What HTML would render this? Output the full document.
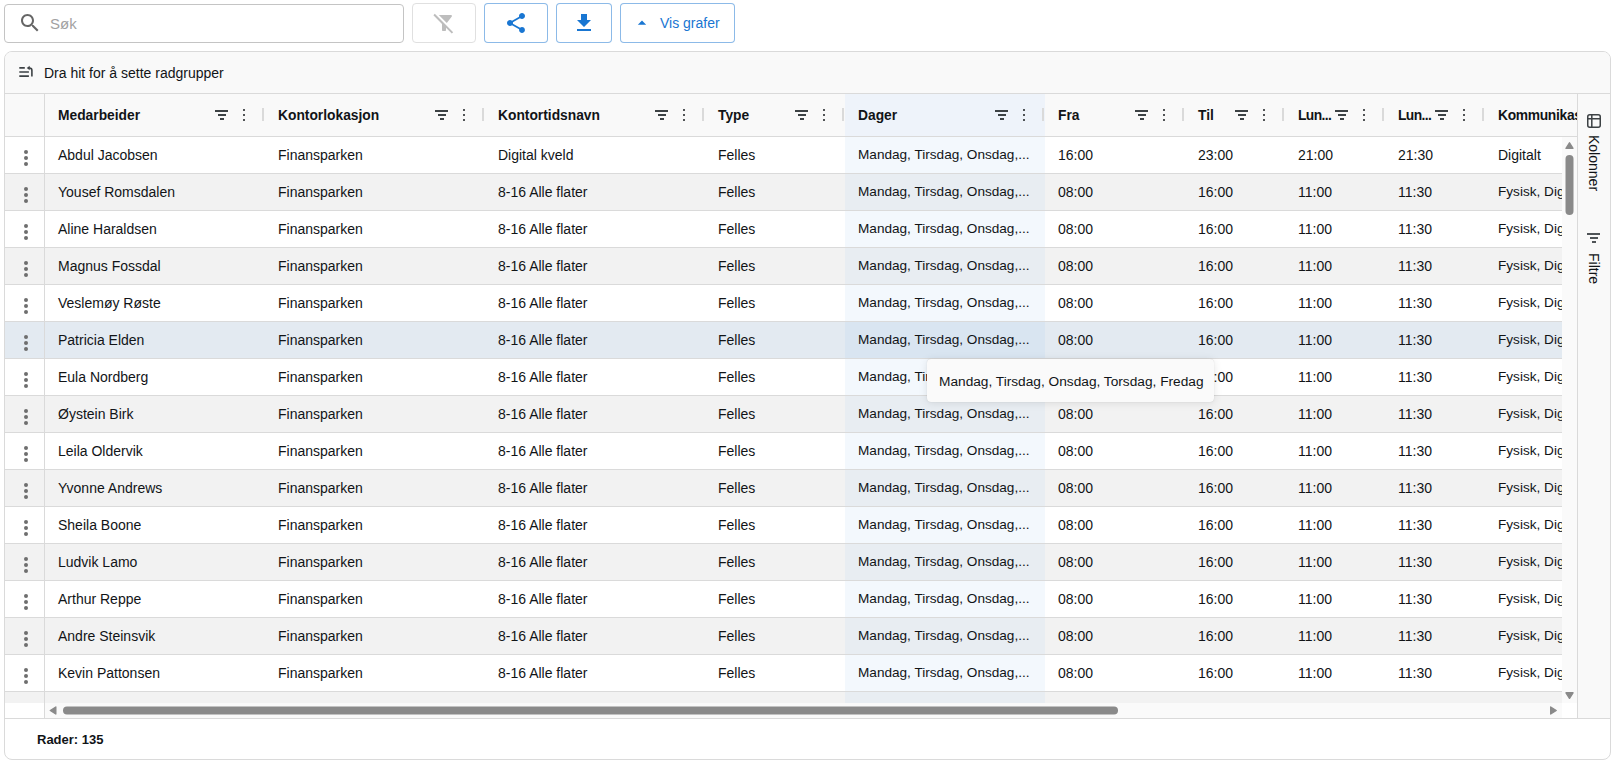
<!DOCTYPE html><html><head><meta charset="utf-8"><style>
*{box-sizing:border-box;margin:0;padding:0}
html,body{width:1615px;height:763px;overflow:hidden;background:#fff}
body{position:relative;font-family:"Liberation Sans",sans-serif;color:#111417;font-size:14px}
.a{position:absolute}
.btn{position:absolute;top:3px;height:40px;border:1px solid rgba(25,118,210,0.5);border-radius:4px;background:#fff}
.grid{position:absolute;left:4px;top:51px;width:1607px;height:709px;border:1px solid #dadada;border-radius:8px;overflow:hidden;background:#fff}
.hc{position:absolute;top:94px;height:42px;overflow:hidden}
.hl{position:absolute;left:13px;top:1px;line-height:42px;font-weight:bold;font-size:13.8px;white-space:nowrap}
.row{position:absolute;left:5px;width:1557px;height:37px;border-bottom:1px solid #dadada;overflow:hidden}
.c{position:absolute;top:0;line-height:36px;white-space:nowrap}
</style></head><body>
<div class="a" style="left:4px;top:4px;width:400px;height:39px;border:1px solid #c4c4c4;border-radius:4px"></div>
<svg class="a" style="left:18px;top:11px" width="24" height="24" viewBox="0 0 24 24"><path fill="#666" d="M15.5 14h-.79l-.28-.27C15.41 12.59 16 11.11 16 9.5 16 5.91 13.09 3 9.5 3S3 5.91 3 9.5 5.91 16 9.5 16c1.61 0 3.09-.59 4.23-1.57l.27.28v.79l5 4.99L20.49 19l-4.99-5zm-6 0C7.01 14 5 11.99 5 9.5S7.01 5 9.5 5 14 7.01 14 9.5 11.99 14 9.5 14z"/></svg>
<div class="a" style="left:50px;top:4px;line-height:39px;font-size:15px;color:#a2a2a2">Søk</div>
<div class="btn" style="left:412px;width:64px;border-color:#e0e0e0"></div>
<svg class="a" style="left:432px;top:11px" width="24" height="24" viewBox="0 0 24 24"><path fill="#bdbdbd" d="M19.79 5.61C20.3 4.95 19.83 4 19 4H6.83l7.97 7.97 4.99-6.36zM2.81 2.81 1.39 4.22 10 13v6c0 .55.45 1 1 1h2c.55 0 1-.45 1-1v-2.17l5.78 5.78 1.41-1.41L2.81 2.81z"/></svg>
<div class="btn" style="left:484px;width:64px"></div>
<svg class="a" style="left:504px;top:11px" width="24" height="24" viewBox="0 0 24 24"><path fill="#1976d2" d="M18 16.08c-.76 0-1.44.3-1.96.77L8.91 12.7c.05-.23.09-.46.09-.7s-.04-.47-.09-.7l7.05-4.11c.54.5 1.25.81 2.04.81 1.66 0 3-1.34 3-3s-1.34-3-3-3-3 1.34-3 3c0 .24.04.47.09.7L8.04 9.81C7.5 9.31 6.79 9 6 9c-1.66 0-3 1.34-3 3s1.34 3 3 3c.79 0 1.5-.31 2.04-.81l7.12 4.16c-.05.21-.08.43-.08.65 0 1.61 1.31 2.92 2.92 2.92 1.61 0 2.92-1.31 2.92-2.92s-1.31-2.92-2.92-2.92z"/></svg>
<div class="btn" style="left:556px;width:56px"></div>
<svg class="a" style="left:572px;top:11px" width="24" height="24" viewBox="0 0 24 24"><path fill="#1976d2" d="M19 9h-4V3H9v6H5l7 7 7-7zM5 18v2h14v-2H5z"/></svg>
<div class="btn" style="left:620px;width:115px"></div>
<svg class="a" style="left:632px;top:13px" width="20" height="20" viewBox="0 0 24 24"><path fill="#1976d2" d="m7 14 5-5 5 5z"/></svg>
<div class="a" style="left:660px;top:3px;line-height:40px;font-size:14px;color:#1976d2">Vis grafer</div>
<div class="grid"></div>
<div class="a" style="left:5px;top:52px;width:1605px;height:42px;background:#f9f9f9;border-bottom:1px solid #dadada;border-radius:7px 7px 0 0"></div>
<svg class="a" style="left:18px;top:64px" width="16" height="16" viewBox="0 0 16 16"><g fill="none" stroke="#3d4245" stroke-width="1.6"><path d="M1.3 3.9H6.8M1.3 8H10.9M1.3 12.1H10.9M13.9 12.4V6.5Q13.9 4 11.4 4H10.5"/></g><path fill="#3d4245" d="M11.7 1.8V6.2L8.7 4z"/></svg>
<div class="a" style="left:44px;top:52px;line-height:42px;font-size:14px">Dra hit for å sette radgrupper</div>
<div class="a" style="left:5px;top:94px;width:1572px;height:43px;background:#f9f9f9;border-bottom:1px solid #dadada"></div>
<div class="a" style="left:44px;top:94px;width:1px;height:42px;background:#dadada"></div>
<div class="a" style="left:845px;top:94px;width:200px;height:42px;background:#eef3fa"></div>
<div class="hc" style="left:45px;width:220px"><div class="hl" style="">Medarbeider</div></div>
<div class="a" style="left:215px;top:110px;width:13px;height:2px;background:#3d4245"></div><div class="a" style="left:218px;top:114px;width:8px;height:2px;background:#3d4245"></div><div class="a" style="left:220px;top:118px;width:4px;height:2px;background:#3d4245"></div>
<div class="a" style="left:242.7px;top:108.7px;width:2.6px;height:2.6px;border-radius:50%;background:#181d1f"></div><div class="a" style="left:242.7px;top:113.7px;width:2.6px;height:2.6px;border-radius:50%;background:#181d1f"></div><div class="a" style="left:242.7px;top:118.7px;width:2.6px;height:2.6px;border-radius:50%;background:#181d1f"></div>
<div class="a" style="left:262px;top:108px;width:2px;height:13px;background:#dadada"></div>
<div class="hc" style="left:265px;width:220px"><div class="hl" style="">Kontorlokasjon</div></div>
<div class="a" style="left:435px;top:110px;width:13px;height:2px;background:#3d4245"></div><div class="a" style="left:438px;top:114px;width:8px;height:2px;background:#3d4245"></div><div class="a" style="left:440px;top:118px;width:4px;height:2px;background:#3d4245"></div>
<div class="a" style="left:462.7px;top:108.7px;width:2.6px;height:2.6px;border-radius:50%;background:#181d1f"></div><div class="a" style="left:462.7px;top:113.7px;width:2.6px;height:2.6px;border-radius:50%;background:#181d1f"></div><div class="a" style="left:462.7px;top:118.7px;width:2.6px;height:2.6px;border-radius:50%;background:#181d1f"></div>
<div class="a" style="left:482px;top:108px;width:2px;height:13px;background:#dadada"></div>
<div class="hc" style="left:485px;width:220px"><div class="hl" style="">Kontortidsnavn</div></div>
<div class="a" style="left:655px;top:110px;width:13px;height:2px;background:#3d4245"></div><div class="a" style="left:658px;top:114px;width:8px;height:2px;background:#3d4245"></div><div class="a" style="left:660px;top:118px;width:4px;height:2px;background:#3d4245"></div>
<div class="a" style="left:682.7px;top:108.7px;width:2.6px;height:2.6px;border-radius:50%;background:#181d1f"></div><div class="a" style="left:682.7px;top:113.7px;width:2.6px;height:2.6px;border-radius:50%;background:#181d1f"></div><div class="a" style="left:682.7px;top:118.7px;width:2.6px;height:2.6px;border-radius:50%;background:#181d1f"></div>
<div class="a" style="left:702px;top:108px;width:2px;height:13px;background:#dadada"></div>
<div class="hc" style="left:705px;width:140px"><div class="hl" style="">Type</div></div>
<div class="a" style="left:795px;top:110px;width:13px;height:2px;background:#3d4245"></div><div class="a" style="left:798px;top:114px;width:8px;height:2px;background:#3d4245"></div><div class="a" style="left:800px;top:118px;width:4px;height:2px;background:#3d4245"></div>
<div class="a" style="left:822.7px;top:108.7px;width:2.6px;height:2.6px;border-radius:50%;background:#181d1f"></div><div class="a" style="left:822.7px;top:113.7px;width:2.6px;height:2.6px;border-radius:50%;background:#181d1f"></div><div class="a" style="left:822.7px;top:118.7px;width:2.6px;height:2.6px;border-radius:50%;background:#181d1f"></div>
<div class="a" style="left:842px;top:108px;width:2px;height:13px;background:#dadada"></div>
<div class="hc" style="left:845px;width:200px"><div class="hl" style="">Dager</div></div>
<div class="a" style="left:995px;top:110px;width:13px;height:2px;background:#3d4245"></div><div class="a" style="left:998px;top:114px;width:8px;height:2px;background:#3d4245"></div><div class="a" style="left:1000px;top:118px;width:4px;height:2px;background:#3d4245"></div>
<div class="a" style="left:1022.7px;top:108.7px;width:2.6px;height:2.6px;border-radius:50%;background:#181d1f"></div><div class="a" style="left:1022.7px;top:113.7px;width:2.6px;height:2.6px;border-radius:50%;background:#181d1f"></div><div class="a" style="left:1022.7px;top:118.7px;width:2.6px;height:2.6px;border-radius:50%;background:#181d1f"></div>
<div class="a" style="left:1042px;top:108px;width:2px;height:13px;background:#dadada"></div>
<div class="hc" style="left:1045px;width:140px"><div class="hl" style="">Fra</div></div>
<div class="a" style="left:1135px;top:110px;width:13px;height:2px;background:#3d4245"></div><div class="a" style="left:1138px;top:114px;width:8px;height:2px;background:#3d4245"></div><div class="a" style="left:1140px;top:118px;width:4px;height:2px;background:#3d4245"></div>
<div class="a" style="left:1162.7px;top:108.7px;width:2.6px;height:2.6px;border-radius:50%;background:#181d1f"></div><div class="a" style="left:1162.7px;top:113.7px;width:2.6px;height:2.6px;border-radius:50%;background:#181d1f"></div><div class="a" style="left:1162.7px;top:118.7px;width:2.6px;height:2.6px;border-radius:50%;background:#181d1f"></div>
<div class="a" style="left:1182px;top:108px;width:2px;height:13px;background:#dadada"></div>
<div class="hc" style="left:1185px;width:100px"><div class="hl" style="">Til</div></div>
<div class="a" style="left:1235px;top:110px;width:13px;height:2px;background:#3d4245"></div><div class="a" style="left:1238px;top:114px;width:8px;height:2px;background:#3d4245"></div><div class="a" style="left:1240px;top:118px;width:4px;height:2px;background:#3d4245"></div>
<div class="a" style="left:1262.7px;top:108.7px;width:2.6px;height:2.6px;border-radius:50%;background:#181d1f"></div><div class="a" style="left:1262.7px;top:113.7px;width:2.6px;height:2.6px;border-radius:50%;background:#181d1f"></div><div class="a" style="left:1262.7px;top:118.7px;width:2.6px;height:2.6px;border-radius:50%;background:#181d1f"></div>
<div class="a" style="left:1282px;top:108px;width:2px;height:13px;background:#dadada"></div>
<div class="hc" style="left:1285px;width:100px"><div class="hl" style=";letter-spacing:-0.6px">Lun...</div></div>
<div class="a" style="left:1335px;top:110px;width:13px;height:2px;background:#3d4245"></div><div class="a" style="left:1338px;top:114px;width:8px;height:2px;background:#3d4245"></div><div class="a" style="left:1340px;top:118px;width:4px;height:2px;background:#3d4245"></div>
<div class="a" style="left:1362.7px;top:108.7px;width:2.6px;height:2.6px;border-radius:50%;background:#181d1f"></div><div class="a" style="left:1362.7px;top:113.7px;width:2.6px;height:2.6px;border-radius:50%;background:#181d1f"></div><div class="a" style="left:1362.7px;top:118.7px;width:2.6px;height:2.6px;border-radius:50%;background:#181d1f"></div>
<div class="a" style="left:1382px;top:108px;width:2px;height:13px;background:#dadada"></div>
<div class="hc" style="left:1385px;width:100px"><div class="hl" style=";letter-spacing:-0.6px">Lun...</div></div>
<div class="a" style="left:1435px;top:110px;width:13px;height:2px;background:#3d4245"></div><div class="a" style="left:1438px;top:114px;width:8px;height:2px;background:#3d4245"></div><div class="a" style="left:1440px;top:118px;width:4px;height:2px;background:#3d4245"></div>
<div class="a" style="left:1462.7px;top:108.7px;width:2.6px;height:2.6px;border-radius:50%;background:#181d1f"></div><div class="a" style="left:1462.7px;top:113.7px;width:2.6px;height:2.6px;border-radius:50%;background:#181d1f"></div><div class="a" style="left:1462.7px;top:118.7px;width:2.6px;height:2.6px;border-radius:50%;background:#181d1f"></div>
<div class="a" style="left:1482px;top:108px;width:2px;height:13px;background:#dadada"></div>
<div class="hc" style="left:1485px;width:92px"><div class="hl" style=";letter-spacing:-0.3px">Kommunikasjon</div></div>
<div class="row" style="top:137px;background:#ffffff">
<div class="a" style="left:840px;top:0;width:200px;height:36px;background:#f3f8fd"></div>
<div class="a" style="left:39px;top:0;width:1px;height:36px;background:#dadada"></div>
<div class="a" style="left:19.0px;top:13.0px;width:4px;height:4px;border-radius:50%;background:#6e6e6e"></div><div class="a" style="left:19.0px;top:19.0px;width:4px;height:4px;border-radius:50%;background:#6e6e6e"></div><div class="a" style="left:19.0px;top:25.0px;width:4px;height:4px;border-radius:50%;background:#6e6e6e"></div>
<div class="c" style="left:53px">Abdul Jacobsen</div>
<div class="c" style="left:273px">Finansparken</div>
<div class="c" style="left:493px">Digital kveld</div>
<div class="c" style="left:713px">Felles</div>
<div class="c" style="left:853px;font-size:13.6px">Mandag, Tirsdag, Onsdag,...</div>
<div class="c" style="left:1053px">16:00</div>
<div class="c" style="left:1193px">23:00</div>
<div class="c" style="left:1293px">21:00</div>
<div class="c" style="left:1393px">21:30</div>
<div class="c" style="left:1493px">Digitalt</div>
</div>
<div class="row" style="top:174px;background:#f2f2f2">
<div class="a" style="left:840px;top:0;width:200px;height:36px;background:#e8edf2"></div>
<div class="a" style="left:39px;top:0;width:1px;height:36px;background:#dadada"></div>
<div class="a" style="left:19.0px;top:13.0px;width:4px;height:4px;border-radius:50%;background:#6e6e6e"></div><div class="a" style="left:19.0px;top:19.0px;width:4px;height:4px;border-radius:50%;background:#6e6e6e"></div><div class="a" style="left:19.0px;top:25.0px;width:4px;height:4px;border-radius:50%;background:#6e6e6e"></div>
<div class="c" style="left:53px">Yousef Romsdalen</div>
<div class="c" style="left:273px">Finansparken</div>
<div class="c" style="left:493px">8-16 Alle flater</div>
<div class="c" style="left:713px">Felles</div>
<div class="c" style="left:853px;font-size:13.6px">Mandag, Tirsdag, Onsdag,...</div>
<div class="c" style="left:1053px">08:00</div>
<div class="c" style="left:1193px">16:00</div>
<div class="c" style="left:1293px">11:00</div>
<div class="c" style="left:1393px">11:30</div>
<div class="c" style="left:1493px;font-size:13.6px">Fysisk, Digitalt</div>
</div>
<div class="row" style="top:211px;background:#ffffff">
<div class="a" style="left:840px;top:0;width:200px;height:36px;background:#f3f8fd"></div>
<div class="a" style="left:39px;top:0;width:1px;height:36px;background:#dadada"></div>
<div class="a" style="left:19.0px;top:13.0px;width:4px;height:4px;border-radius:50%;background:#6e6e6e"></div><div class="a" style="left:19.0px;top:19.0px;width:4px;height:4px;border-radius:50%;background:#6e6e6e"></div><div class="a" style="left:19.0px;top:25.0px;width:4px;height:4px;border-radius:50%;background:#6e6e6e"></div>
<div class="c" style="left:53px">Aline Haraldsen</div>
<div class="c" style="left:273px">Finansparken</div>
<div class="c" style="left:493px">8-16 Alle flater</div>
<div class="c" style="left:713px">Felles</div>
<div class="c" style="left:853px;font-size:13.6px">Mandag, Tirsdag, Onsdag,...</div>
<div class="c" style="left:1053px">08:00</div>
<div class="c" style="left:1193px">16:00</div>
<div class="c" style="left:1293px">11:00</div>
<div class="c" style="left:1393px">11:30</div>
<div class="c" style="left:1493px;font-size:13.6px">Fysisk, Digitalt</div>
</div>
<div class="row" style="top:248px;background:#f2f2f2">
<div class="a" style="left:840px;top:0;width:200px;height:36px;background:#e8edf2"></div>
<div class="a" style="left:39px;top:0;width:1px;height:36px;background:#dadada"></div>
<div class="a" style="left:19.0px;top:13.0px;width:4px;height:4px;border-radius:50%;background:#6e6e6e"></div><div class="a" style="left:19.0px;top:19.0px;width:4px;height:4px;border-radius:50%;background:#6e6e6e"></div><div class="a" style="left:19.0px;top:25.0px;width:4px;height:4px;border-radius:50%;background:#6e6e6e"></div>
<div class="c" style="left:53px">Magnus Fossdal</div>
<div class="c" style="left:273px">Finansparken</div>
<div class="c" style="left:493px">8-16 Alle flater</div>
<div class="c" style="left:713px">Felles</div>
<div class="c" style="left:853px;font-size:13.6px">Mandag, Tirsdag, Onsdag,...</div>
<div class="c" style="left:1053px">08:00</div>
<div class="c" style="left:1193px">16:00</div>
<div class="c" style="left:1293px">11:00</div>
<div class="c" style="left:1393px">11:30</div>
<div class="c" style="left:1493px;font-size:13.6px">Fysisk, Digitalt</div>
</div>
<div class="row" style="top:285px;background:#ffffff">
<div class="a" style="left:840px;top:0;width:200px;height:36px;background:#f3f8fd"></div>
<div class="a" style="left:39px;top:0;width:1px;height:36px;background:#dadada"></div>
<div class="a" style="left:19.0px;top:13.0px;width:4px;height:4px;border-radius:50%;background:#6e6e6e"></div><div class="a" style="left:19.0px;top:19.0px;width:4px;height:4px;border-radius:50%;background:#6e6e6e"></div><div class="a" style="left:19.0px;top:25.0px;width:4px;height:4px;border-radius:50%;background:#6e6e6e"></div>
<div class="c" style="left:53px">Veslemøy Røste</div>
<div class="c" style="left:273px">Finansparken</div>
<div class="c" style="left:493px">8-16 Alle flater</div>
<div class="c" style="left:713px">Felles</div>
<div class="c" style="left:853px;font-size:13.6px">Mandag, Tirsdag, Onsdag,...</div>
<div class="c" style="left:1053px">08:00</div>
<div class="c" style="left:1193px">16:00</div>
<div class="c" style="left:1293px">11:00</div>
<div class="c" style="left:1393px">11:30</div>
<div class="c" style="left:1493px;font-size:13.6px">Fysisk, Digitalt</div>
</div>
<div class="row" style="top:322px;background:#e3eaf1">
<div class="a" style="left:840px;top:0;width:200px;height:36px;background:#d9e5f1"></div>
<div class="a" style="left:39px;top:0;width:1px;height:36px;background:#dadada"></div>
<div class="a" style="left:19.0px;top:13.0px;width:4px;height:4px;border-radius:50%;background:#6e6e6e"></div><div class="a" style="left:19.0px;top:19.0px;width:4px;height:4px;border-radius:50%;background:#6e6e6e"></div><div class="a" style="left:19.0px;top:25.0px;width:4px;height:4px;border-radius:50%;background:#6e6e6e"></div>
<div class="c" style="left:53px">Patricia Elden</div>
<div class="c" style="left:273px">Finansparken</div>
<div class="c" style="left:493px">8-16 Alle flater</div>
<div class="c" style="left:713px">Felles</div>
<div class="c" style="left:853px;font-size:13.6px">Mandag, Tirsdag, Onsdag,...</div>
<div class="c" style="left:1053px">08:00</div>
<div class="c" style="left:1193px">16:00</div>
<div class="c" style="left:1293px">11:00</div>
<div class="c" style="left:1393px">11:30</div>
<div class="c" style="left:1493px;font-size:13.6px">Fysisk, Digitalt</div>
</div>
<div class="row" style="top:359px;background:#ffffff">
<div class="a" style="left:840px;top:0;width:200px;height:36px;background:#f3f8fd"></div>
<div class="a" style="left:39px;top:0;width:1px;height:36px;background:#dadada"></div>
<div class="a" style="left:19.0px;top:13.0px;width:4px;height:4px;border-radius:50%;background:#6e6e6e"></div><div class="a" style="left:19.0px;top:19.0px;width:4px;height:4px;border-radius:50%;background:#6e6e6e"></div><div class="a" style="left:19.0px;top:25.0px;width:4px;height:4px;border-radius:50%;background:#6e6e6e"></div>
<div class="c" style="left:53px">Eula Nordberg</div>
<div class="c" style="left:273px">Finansparken</div>
<div class="c" style="left:493px">8-16 Alle flater</div>
<div class="c" style="left:713px">Felles</div>
<div class="c" style="left:853px;font-size:13.6px">Mandag, Tirsdag, Onsdag,...</div>
<div class="c" style="left:1053px">08:00</div>
<div class="c" style="left:1193px">16:00</div>
<div class="c" style="left:1293px">11:00</div>
<div class="c" style="left:1393px">11:30</div>
<div class="c" style="left:1493px;font-size:13.6px">Fysisk, Digitalt</div>
</div>
<div class="row" style="top:396px;background:#f2f2f2">
<div class="a" style="left:840px;top:0;width:200px;height:36px;background:#e8edf2"></div>
<div class="a" style="left:39px;top:0;width:1px;height:36px;background:#dadada"></div>
<div class="a" style="left:19.0px;top:13.0px;width:4px;height:4px;border-radius:50%;background:#6e6e6e"></div><div class="a" style="left:19.0px;top:19.0px;width:4px;height:4px;border-radius:50%;background:#6e6e6e"></div><div class="a" style="left:19.0px;top:25.0px;width:4px;height:4px;border-radius:50%;background:#6e6e6e"></div>
<div class="c" style="left:53px">Øystein Birk</div>
<div class="c" style="left:273px">Finansparken</div>
<div class="c" style="left:493px">8-16 Alle flater</div>
<div class="c" style="left:713px">Felles</div>
<div class="c" style="left:853px;font-size:13.6px">Mandag, Tirsdag, Onsdag,...</div>
<div class="c" style="left:1053px">08:00</div>
<div class="c" style="left:1193px">16:00</div>
<div class="c" style="left:1293px">11:00</div>
<div class="c" style="left:1393px">11:30</div>
<div class="c" style="left:1493px;font-size:13.6px">Fysisk, Digitalt</div>
</div>
<div class="row" style="top:433px;background:#ffffff">
<div class="a" style="left:840px;top:0;width:200px;height:36px;background:#f3f8fd"></div>
<div class="a" style="left:39px;top:0;width:1px;height:36px;background:#dadada"></div>
<div class="a" style="left:19.0px;top:13.0px;width:4px;height:4px;border-radius:50%;background:#6e6e6e"></div><div class="a" style="left:19.0px;top:19.0px;width:4px;height:4px;border-radius:50%;background:#6e6e6e"></div><div class="a" style="left:19.0px;top:25.0px;width:4px;height:4px;border-radius:50%;background:#6e6e6e"></div>
<div class="c" style="left:53px">Leila Oldervik</div>
<div class="c" style="left:273px">Finansparken</div>
<div class="c" style="left:493px">8-16 Alle flater</div>
<div class="c" style="left:713px">Felles</div>
<div class="c" style="left:853px;font-size:13.6px">Mandag, Tirsdag, Onsdag,...</div>
<div class="c" style="left:1053px">08:00</div>
<div class="c" style="left:1193px">16:00</div>
<div class="c" style="left:1293px">11:00</div>
<div class="c" style="left:1393px">11:30</div>
<div class="c" style="left:1493px;font-size:13.6px">Fysisk, Digitalt</div>
</div>
<div class="row" style="top:470px;background:#f2f2f2">
<div class="a" style="left:840px;top:0;width:200px;height:36px;background:#e8edf2"></div>
<div class="a" style="left:39px;top:0;width:1px;height:36px;background:#dadada"></div>
<div class="a" style="left:19.0px;top:13.0px;width:4px;height:4px;border-radius:50%;background:#6e6e6e"></div><div class="a" style="left:19.0px;top:19.0px;width:4px;height:4px;border-radius:50%;background:#6e6e6e"></div><div class="a" style="left:19.0px;top:25.0px;width:4px;height:4px;border-radius:50%;background:#6e6e6e"></div>
<div class="c" style="left:53px">Yvonne Andrews</div>
<div class="c" style="left:273px">Finansparken</div>
<div class="c" style="left:493px">8-16 Alle flater</div>
<div class="c" style="left:713px">Felles</div>
<div class="c" style="left:853px;font-size:13.6px">Mandag, Tirsdag, Onsdag,...</div>
<div class="c" style="left:1053px">08:00</div>
<div class="c" style="left:1193px">16:00</div>
<div class="c" style="left:1293px">11:00</div>
<div class="c" style="left:1393px">11:30</div>
<div class="c" style="left:1493px;font-size:13.6px">Fysisk, Digitalt</div>
</div>
<div class="row" style="top:507px;background:#ffffff">
<div class="a" style="left:840px;top:0;width:200px;height:36px;background:#f3f8fd"></div>
<div class="a" style="left:39px;top:0;width:1px;height:36px;background:#dadada"></div>
<div class="a" style="left:19.0px;top:13.0px;width:4px;height:4px;border-radius:50%;background:#6e6e6e"></div><div class="a" style="left:19.0px;top:19.0px;width:4px;height:4px;border-radius:50%;background:#6e6e6e"></div><div class="a" style="left:19.0px;top:25.0px;width:4px;height:4px;border-radius:50%;background:#6e6e6e"></div>
<div class="c" style="left:53px">Sheila Boone</div>
<div class="c" style="left:273px">Finansparken</div>
<div class="c" style="left:493px">8-16 Alle flater</div>
<div class="c" style="left:713px">Felles</div>
<div class="c" style="left:853px;font-size:13.6px">Mandag, Tirsdag, Onsdag,...</div>
<div class="c" style="left:1053px">08:00</div>
<div class="c" style="left:1193px">16:00</div>
<div class="c" style="left:1293px">11:00</div>
<div class="c" style="left:1393px">11:30</div>
<div class="c" style="left:1493px;font-size:13.6px">Fysisk, Digitalt</div>
</div>
<div class="row" style="top:544px;background:#f2f2f2">
<div class="a" style="left:840px;top:0;width:200px;height:36px;background:#e8edf2"></div>
<div class="a" style="left:39px;top:0;width:1px;height:36px;background:#dadada"></div>
<div class="a" style="left:19.0px;top:13.0px;width:4px;height:4px;border-radius:50%;background:#6e6e6e"></div><div class="a" style="left:19.0px;top:19.0px;width:4px;height:4px;border-radius:50%;background:#6e6e6e"></div><div class="a" style="left:19.0px;top:25.0px;width:4px;height:4px;border-radius:50%;background:#6e6e6e"></div>
<div class="c" style="left:53px">Ludvik Lamo</div>
<div class="c" style="left:273px">Finansparken</div>
<div class="c" style="left:493px">8-16 Alle flater</div>
<div class="c" style="left:713px">Felles</div>
<div class="c" style="left:853px;font-size:13.6px">Mandag, Tirsdag, Onsdag,...</div>
<div class="c" style="left:1053px">08:00</div>
<div class="c" style="left:1193px">16:00</div>
<div class="c" style="left:1293px">11:00</div>
<div class="c" style="left:1393px">11:30</div>
<div class="c" style="left:1493px;font-size:13.6px">Fysisk, Digitalt</div>
</div>
<div class="row" style="top:581px;background:#ffffff">
<div class="a" style="left:840px;top:0;width:200px;height:36px;background:#f3f8fd"></div>
<div class="a" style="left:39px;top:0;width:1px;height:36px;background:#dadada"></div>
<div class="a" style="left:19.0px;top:13.0px;width:4px;height:4px;border-radius:50%;background:#6e6e6e"></div><div class="a" style="left:19.0px;top:19.0px;width:4px;height:4px;border-radius:50%;background:#6e6e6e"></div><div class="a" style="left:19.0px;top:25.0px;width:4px;height:4px;border-radius:50%;background:#6e6e6e"></div>
<div class="c" style="left:53px">Arthur Reppe</div>
<div class="c" style="left:273px">Finansparken</div>
<div class="c" style="left:493px">8-16 Alle flater</div>
<div class="c" style="left:713px">Felles</div>
<div class="c" style="left:853px;font-size:13.6px">Mandag, Tirsdag, Onsdag,...</div>
<div class="c" style="left:1053px">08:00</div>
<div class="c" style="left:1193px">16:00</div>
<div class="c" style="left:1293px">11:00</div>
<div class="c" style="left:1393px">11:30</div>
<div class="c" style="left:1493px;font-size:13.6px">Fysisk, Digitalt</div>
</div>
<div class="row" style="top:618px;background:#f2f2f2">
<div class="a" style="left:840px;top:0;width:200px;height:36px;background:#e8edf2"></div>
<div class="a" style="left:39px;top:0;width:1px;height:36px;background:#dadada"></div>
<div class="a" style="left:19.0px;top:13.0px;width:4px;height:4px;border-radius:50%;background:#6e6e6e"></div><div class="a" style="left:19.0px;top:19.0px;width:4px;height:4px;border-radius:50%;background:#6e6e6e"></div><div class="a" style="left:19.0px;top:25.0px;width:4px;height:4px;border-radius:50%;background:#6e6e6e"></div>
<div class="c" style="left:53px">Andre Steinsvik</div>
<div class="c" style="left:273px">Finansparken</div>
<div class="c" style="left:493px">8-16 Alle flater</div>
<div class="c" style="left:713px">Felles</div>
<div class="c" style="left:853px;font-size:13.6px">Mandag, Tirsdag, Onsdag,...</div>
<div class="c" style="left:1053px">08:00</div>
<div class="c" style="left:1193px">16:00</div>
<div class="c" style="left:1293px">11:00</div>
<div class="c" style="left:1393px">11:30</div>
<div class="c" style="left:1493px;font-size:13.6px">Fysisk, Digitalt</div>
</div>
<div class="row" style="top:655px;background:#ffffff">
<div class="a" style="left:840px;top:0;width:200px;height:36px;background:#f3f8fd"></div>
<div class="a" style="left:39px;top:0;width:1px;height:36px;background:#dadada"></div>
<div class="a" style="left:19.0px;top:13.0px;width:4px;height:4px;border-radius:50%;background:#6e6e6e"></div><div class="a" style="left:19.0px;top:19.0px;width:4px;height:4px;border-radius:50%;background:#6e6e6e"></div><div class="a" style="left:19.0px;top:25.0px;width:4px;height:4px;border-radius:50%;background:#6e6e6e"></div>
<div class="c" style="left:53px">Kevin Pattonsen</div>
<div class="c" style="left:273px">Finansparken</div>
<div class="c" style="left:493px">8-16 Alle flater</div>
<div class="c" style="left:713px">Felles</div>
<div class="c" style="left:853px;font-size:13.6px">Mandag, Tirsdag, Onsdag,...</div>
<div class="c" style="left:1053px">08:00</div>
<div class="c" style="left:1193px">16:00</div>
<div class="c" style="left:1293px">11:00</div>
<div class="c" style="left:1393px">11:30</div>
<div class="c" style="left:1493px;font-size:13.6px">Fysisk, Digitalt</div>
</div>
<div class="a" style="left:5px;top:692px;width:1557px;height:11px;background:#f2f2f2"></div>
<div class="a" style="left:845px;top:692px;width:200px;height:11px;background:#e8edf2"></div>
<div class="a" style="left:44px;top:692px;width:1px;height:11px;background:#dadada"></div>
<div class="a" style="left:1562px;top:137px;width:15px;height:566px;background:#fafafa"></div>
<svg class="a" style="left:1562px;top:137px" width="15" height="566"><path fill="#8a8a8a" stroke="#8a8a8a" stroke-width="1.4" stroke-linejoin="round" d="M4 11.3H11L7.5 5.8z"/><path fill="#8a8a8a" stroke="#8a8a8a" stroke-width="1.4" stroke-linejoin="round" d="M4 555.8H11L7.5 561.3z"/><rect x="3.5" y="18" width="8" height="60" rx="4" fill="#8a8a8a"/></svg>
<div class="a" style="left:5px;top:703px;width:1572px;height:15px;background:#fff"></div>
<div class="a" style="left:45px;top:703px;width:1517px;height:15px;background:#fafafa"></div>
<div class="a" style="left:44px;top:703px;width:1px;height:15px;background:#dadada"></div>
<svg class="a" style="left:45px;top:703px" width="1532" height="15"><path fill="#8a8a8a" stroke="#8a8a8a" stroke-width="1.4" stroke-linejoin="round" d="M10.8 4V11L5.3 7.5z"/><path fill="#8a8a8a" stroke="#8a8a8a" stroke-width="1.4" stroke-linejoin="round" d="M1505.7 4V11L1511.2 7.5z"/><rect x="18" y="3.5" width="1055" height="8" rx="4" fill="#8a8a8a"/></svg>
<div class="a" style="left:1577px;top:94px;width:1px;height:625px;background:#dadada"></div>
<div class="a" style="left:1578px;top:94px;width:32px;height:624px;background:#f9f9f9"></div>
<svg class="a" style="left:1586px;top:113px" width="16" height="16" viewBox="0 0 16 16"><g fill="none" stroke="#3d4245" stroke-width="1.5"><rect x="1.75" y="1.75" width="12.5" height="12.5" rx="2"/><path d="M1.75 5.8H14.25M5.8 1.75V14.25"/></g></svg>
<div class="a" style="left:1586px;top:135px;width:16px;height:60px;writing-mode:vertical-rl;line-height:16px;font-size:14px">Kolonner</div>
<div class="a" style="left:1587px;top:233px;width:13px;height:2px;background:#4f5457"></div><div class="a" style="left:1590px;top:237px;width:8px;height:2px;background:#4f5457"></div><div class="a" style="left:1592px;top:241px;width:4px;height:2px;background:#4f5457"></div>
<div class="a" style="left:1586px;top:253px;width:16px;height:40px;writing-mode:vertical-rl;line-height:16px;font-size:14px">Filtre</div>
<div class="a" style="left:5px;top:718px;width:1605px;height:1px;background:#dadada"></div>
<div class="a" style="left:37px;top:720px;line-height:40px;font-weight:bold;font-size:13px">Rader: 135</div>
<div class="a" style="left:927px;top:359px;width:287px;height:43px;background:#fafafa;border-radius:4px;box-shadow:0 1px 8px rgba(0,0,0,0.10),0 0 1px rgba(0,0,0,0.18)"></div>
<div class="a" style="left:939px;top:360px;line-height:44px;font-size:13.7px;white-space:nowrap">Mandag, Tirsdag, Onsdag, Torsdag, Fredag</div>
</body></html>
